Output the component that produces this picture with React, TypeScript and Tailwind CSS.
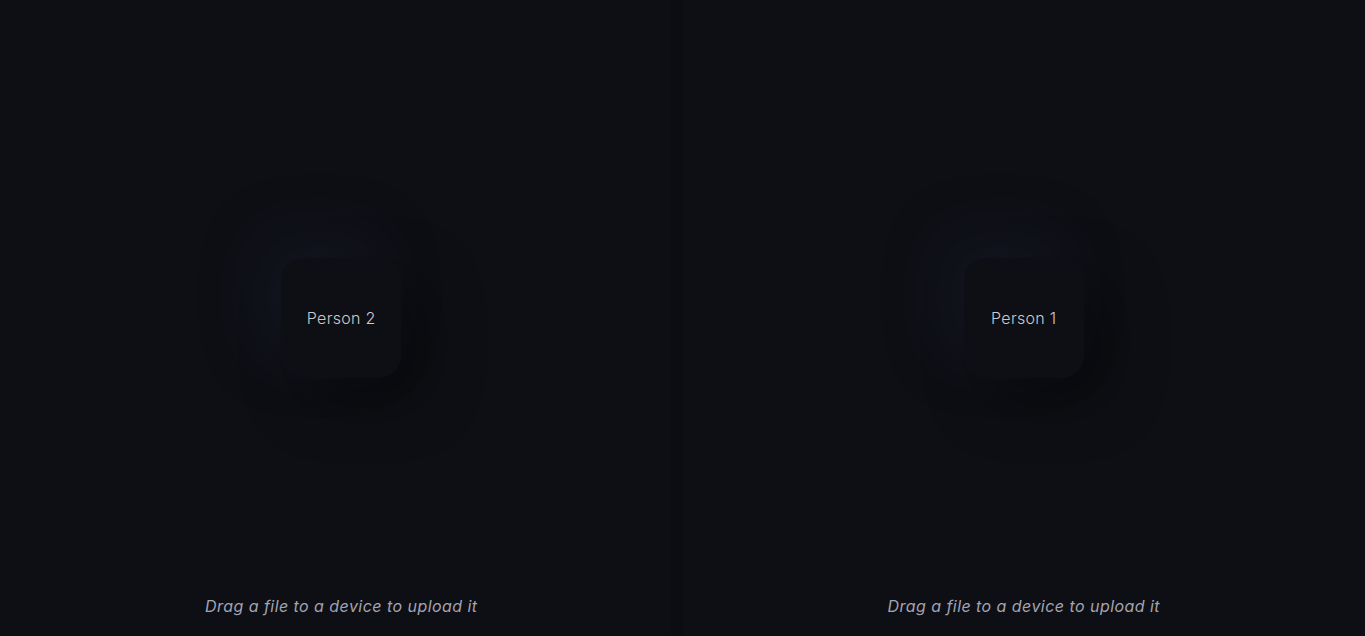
const Device = ({ name }: { name: string }) => (
  <div className="flex h-full flex-col items-center">
    <div className="flex-1" />
    <div className="flex h-[120px] w-[120px] items-center justify-center rounded-[22px] bg-[#0e0f14] shadow-[-22px_-22px_60px_rgba(32,38,62,0.3),22px_22px_60px_rgba(0,0,0,0.38)]">
      <span className="text-[16px] font-light tracking-[0.3px] text-[#cacacd]">{name}</span>
    </div>
    <div className="flex flex-1 flex-col items-center justify-end">
      <p className="pb-[18px] text-[16px] italic tracking-[0.45px] text-[#a3a4b2]">Drag a file to a device to upload it</p>
    </div>
  </div>
);

export default function App() {
  return (
    <div
      className="grid h-[636px] w-full grid-cols-2 bg-[#0e0f14]"
      style={{ fontFamily: 'Inter, "Noto Sans", sans-serif' }}
    >
      <div className="h-full shadow-[inset_-12px_0_0_#0c0d11]">
        <Device name="Person 2" />
      </div>
      <div className="h-full">
        <Device name="Person 1" />
      </div>
    </div>
  );
}
